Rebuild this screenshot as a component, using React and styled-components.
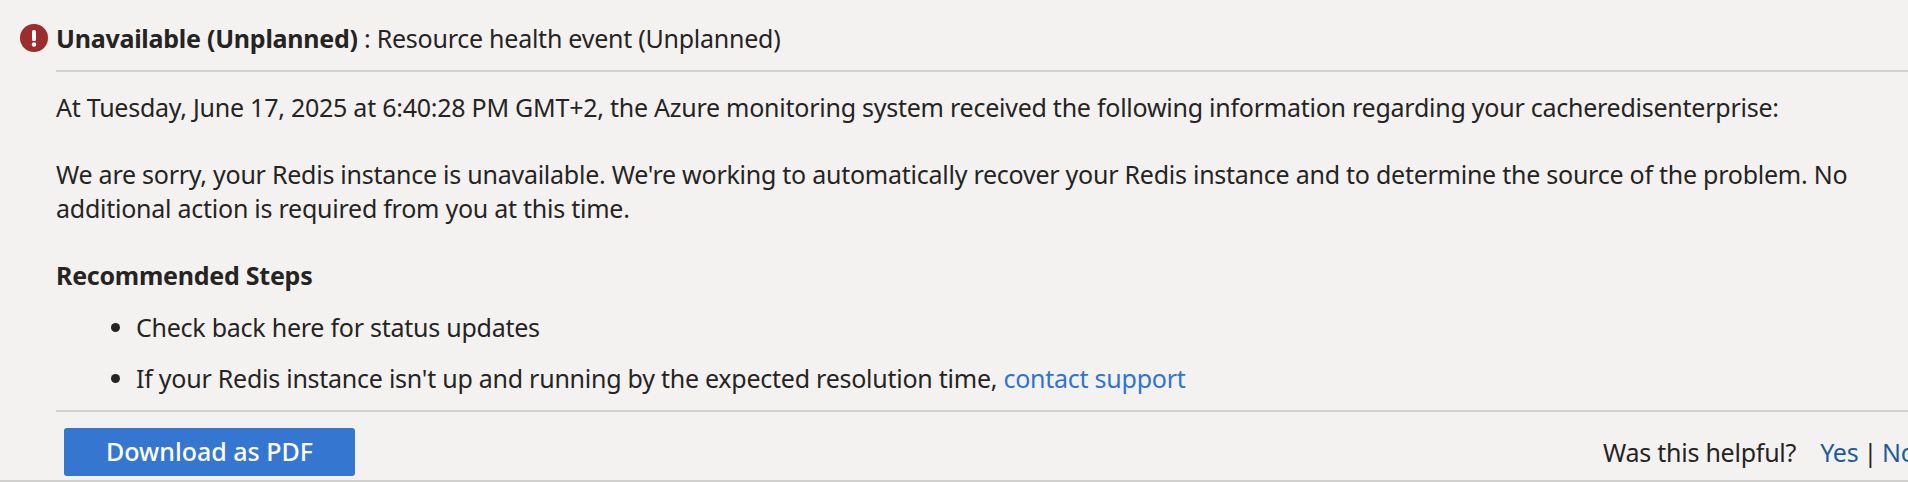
import React from "react";
import styled, { createGlobalStyle } from "styled-components";

const Global = createGlobalStyle`
  html, body { margin: 0; padding: 0; background: #f3f2f1; overflow: hidden; }
  body { width: 1908px; height: 482px; }
`;

const Page = styled.div`
  box-sizing: border-box;
  width: 1908px;
  height: 482px;
  overflow: hidden;
  background: #f3f2f1;
  color: #252423;
  font-family: "Noto Sans", "Open Sans", sans-serif;
  font-size: 25px;
  letter-spacing: -0.25px;
  border-bottom: 2px solid #d2d0ce;
  display: flex;
  flex-direction: column;
`;

const Header = styled.header`
  display: flex;
  align-items: center;
  height: 70px;
  padding: 6px 0 0 20px;
  box-sizing: border-box;
  gap: 8px;
  flex: none;
`;

const Title = styled.span`
  font-weight: 400;
  white-space: nowrap;
  strong { font-weight: 700; }
`;

const Body = styled.section`
  margin-left: 56px;
  flex: none;
  height: 342px;
  box-sizing: border-box;
  border-top: 2px solid #d2d0ce;
  border-bottom: 2px solid #d2d0ce;
  padding-top: 18px;
`;

const Para = styled.p`
  margin: 0 0 33px;
  line-height: 34px;
  width: 1800px;
`;

const Heading = styled.h3`
  margin: 0 0 18px;
  font-size: 25px;
  font-weight: 700;
  line-height: 34px;
`;

const Steps = styled.ul`
  margin: 0;
  padding: 0 0 0 80px;
  li { line-height: 34px; margin-bottom: 17px; }
`;

const Link = styled.a`
  color: ${p => p.$tone || "#2f74d0"};
  text-decoration: none;
`;

const Footer = styled.footer`
  display: flex;
  align-items: center;
  justify-content: space-between;
  padding: 16px 0 0 64px;
  width: 1960px;
  box-sizing: border-box;
`;

const Button = styled.button`
  width: 291px;
  height: 48px;
  border: none;
  border-radius: 3px;
  background: #3577d0;
  color: #fff;
  font: 500 25px "Noto Sans", sans-serif;
  padding: 0 0 2px;
`;

const Feedback = styled.div`
  display: flex;
  gap: 5px;
  white-space: nowrap;
  width: 357px;
`;

const Question = styled.span`
  margin-right: 19px;
`;

const ErrorIcon = () => (
  <svg width="28" height="28" viewBox="0 0 28 28" aria-hidden="true">
    <circle cx="14" cy="14" r="14" fill="#9b2c2f" />
    <rect x="12" y="6" width="4" height="11" rx="1.6" fill="#fff" />
    <circle cx="14" cy="20.5" r="2.2" fill="#fff" />
  </svg>
);

export default function App() {
  return (
    <Page>
      <Global />
      <Header>
        <ErrorIcon />
        <Title><strong>Unavailable (Unplanned)</strong> : Resource health event (Unplanned)</Title>
      </Header>
      <Body>
        <Para>At Tuesday, June 17, 2025 at 6:40:28 PM GMT+2, the Azure monitoring system received the following information regarding your cacheredisenterprise:</Para>
        <Para>We are sorry, your Redis instance is unavailable. We're working to automatically recover your Redis instance and to determine the source of the problem. No additional action is required from you at this time.</Para>
        <Heading>Recommended Steps</Heading>
        <Steps>
          <li>Check back here for status updates</li>
          <li>If your Redis instance isn't up and running by the expected resolution time, <Link href="#">contact support</Link></li>
        </Steps>
      </Body>
      <Footer>
        <Button>Download as PDF</Button>
        <Feedback>
          <Question>Was this helpful?</Question>
          <Link href="#" $tone="#1f5a9e">Yes</Link>
          <span>|</span>
          <Link href="#" $tone="#1f5a9e">No</Link>
        </Feedback>
      </Footer>
    </Page>
  );
}
